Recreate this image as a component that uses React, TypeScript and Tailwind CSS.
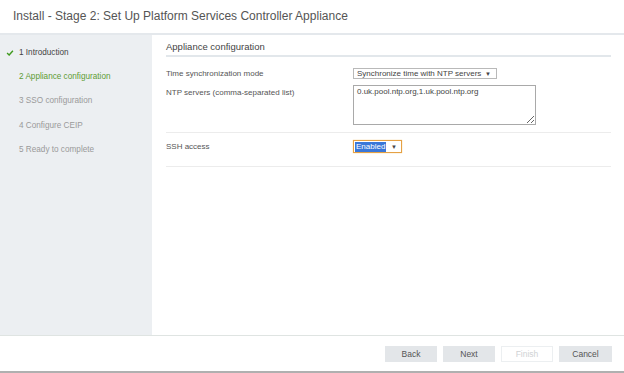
const steps = [
  { label: "1 Introduction", state: "done" },
  { label: "2 Appliance configuration", state: "current" },
  { label: "3 SSO configuration", state: "todo" },
  { label: "4 Configure CEIP", state: "todo" },
  { label: "5 Ready to complete", state: "todo" },
];

const Arrow = () => (
  <span className="text-[6px] leading-none text-[#444]">▼</span>
);

const App = () => {
  return (
    <div
      className="flex h-[373px] w-[624px] flex-col overflow-hidden border-b-2 border-[#b0b0b0] bg-white text-[#555]"
      style={{ fontFamily: '"Liberation Sans", Arial, sans-serif' }}
    >
      {/* title bar */}
      <div className="flex h-[35px] shrink-0 items-center border-b-2 border-[#e4e8ec] pb-[2px] pl-[13px]">
        <h1 className="text-[12px] leading-none text-[#555]">
          Install - Stage 2: Set Up Platform Services Controller Appliance
        </h1>
      </div>

      <div className="flex flex-1">
        {/* wizard steps */}
        <ul className="w-[152px] shrink-0 bg-[#eceff2] pt-[6px]">
          {steps.map((s) => (
            <li
              key={s.label}
              className={`relative flex h-[24.2px] items-center pl-[19px] text-[8.2px] ${
                s.state === "done"
                  ? "text-[#444]"
                  : s.state === "current"
                  ? "text-[#5d9c32]"
                  : "text-[#9a9a9a]"
              }`}
            >
              {s.state === "done" && (
                <svg
                  viewBox="0 0 8 7"
                  className="absolute left-[6px] top-[9px] h-[6px] w-[8px]"
                >
                  <path
                    d="M0.6 3.6 L3 5.9 L7.4 0.8"
                    fill="none"
                    stroke="#3f9a1e"
                    strokeWidth="1.6"
                  />
                </svg>
              )}
              {s.label}
            </li>
          ))}
        </ul>

        {/* form */}
        <div className="flex-1 pl-[14px] pr-[13px]">
          <div className="border-b-2 border-[#e2e7eb] pb-[1px] pt-[5px]">
            <h2 className="text-[9.5px] leading-[14px] text-[#444]">
              Appliance configuration
            </h2>
          </div>

          <div className="mt-[11px] flex items-center text-[8px] leading-[10px]">
            <span className="w-[187px] text-[#555]">Time synchronization mode</span>
            <div className="flex h-[11px] w-[144px] items-center justify-between border border-[#b9b9b9] pl-[3px] pr-[5px] text-[#444]">
              <span>Synchronize time with NTP servers</span>
              <Arrow />
            </div>
          </div>

          <div className="mt-[6px] flex text-[8px] leading-[10px]">
            <span className="w-[187px] pt-[3px] text-[#555]">
              NTP servers (comma-separated list)
            </span>
            <textarea
              readOnly
              value="0.uk.pool.ntp.org,1.uk.pool.ntp.org"
              className="h-[40px] w-[183px] resize border border-[#a9a9a9] px-[3px] pt-[1px] text-[8px] leading-[10px] text-[#444] outline-none"
              style={{ fontFamily: '"Liberation Sans", Arial, sans-serif' }}
            />
          </div>

          <div className="mt-[7px] border-t border-[#ececec]" />

          <div className="mt-[7px] flex items-center text-[8px] leading-[10px]">
            <span className="w-[187px] text-[#555]">SSH access</span>
            <div className="flex h-[13px] w-[49px] items-center justify-between border border-[#e5a145] pl-[1px] pr-[4px] shadow-[0_0_1px_#f0c070]">
              <span className="bg-[#3a77d8] px-[1px] text-white">Enabled</span>
              <Arrow />
            </div>
          </div>

          <div className="mt-[13px] border-t border-[#ececec]" />
        </div>
      </div>

      {/* footer buttons */}
      <div className="flex h-[36px] shrink-0 justify-end gap-[6px] border-t border-[#dfe4e2] pr-[12px] pt-[10px]">
        <button className="h-[16px] w-[52px] bg-[#e3e6e9] text-[8.5px] text-[#555]">
          Back
        </button>
        <button className="h-[16px] w-[52px] bg-[#e3e6e9] text-[8.5px] text-[#555]">
          Next
        </button>
        <button className="h-[16px] w-[52px] border border-[#eceff1] bg-white text-[8.5px] text-[#cfd2d4]">
          Finish
        </button>
        <button className="h-[16px] w-[53px] bg-[#e3e6e9] text-[8.5px] text-[#555]">
          Cancel
        </button>
      </div>
    </div>
  );
};

export default App;
